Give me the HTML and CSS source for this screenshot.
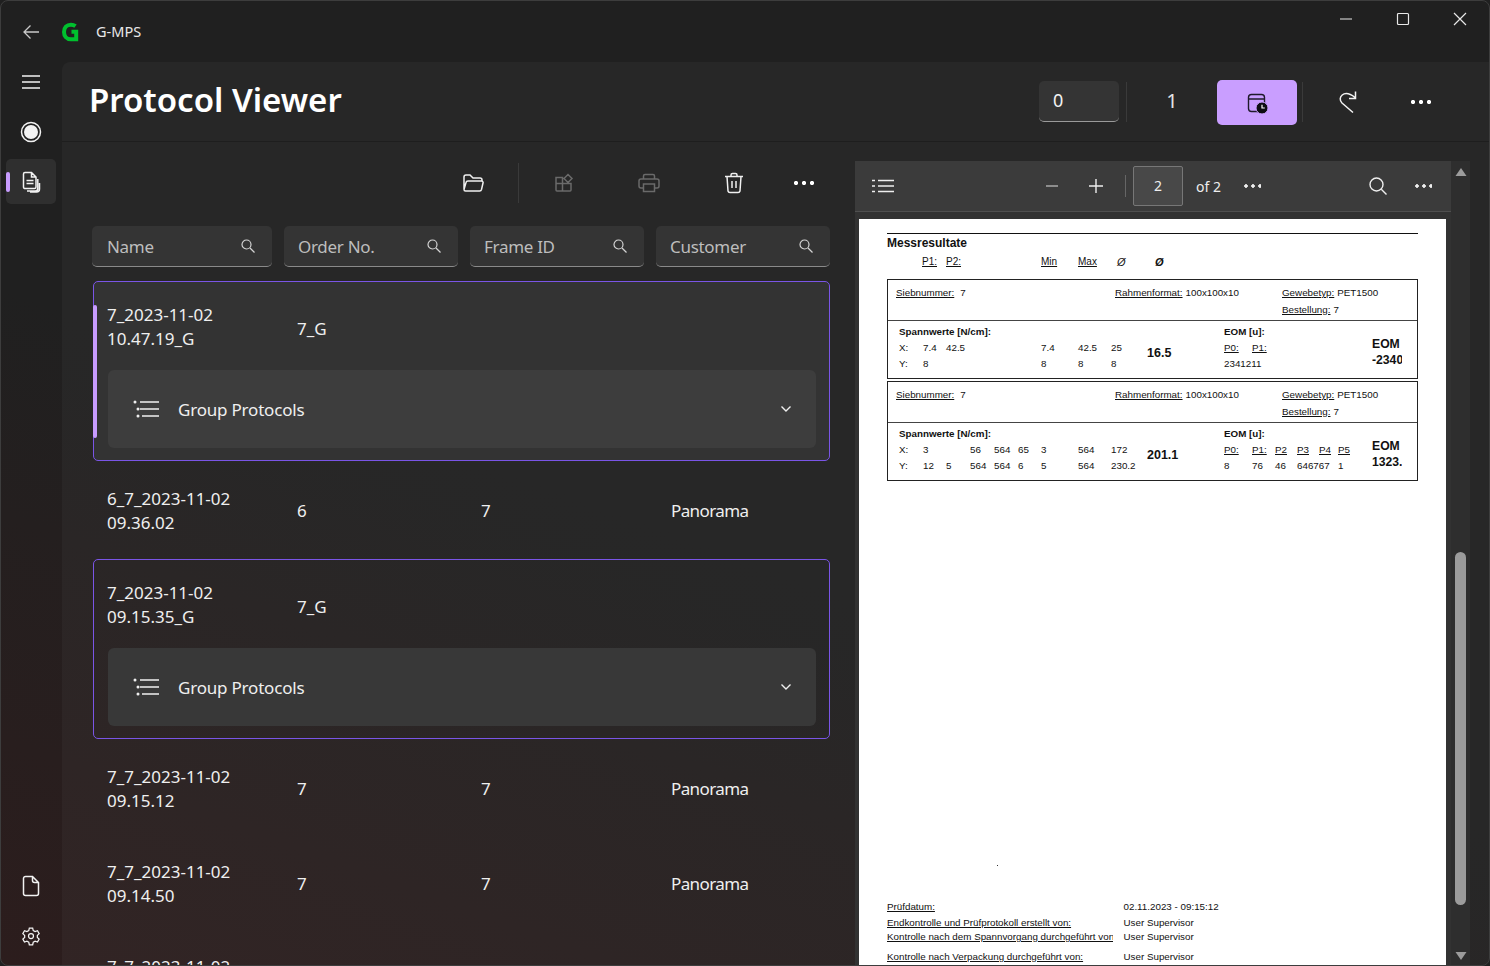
FILE: index.html
```html
<!DOCTYPE html>
<html lang="en">
<head>
<meta charset="UTF-8">
<meta name="viewport" content="width=device-width, initial-scale=1.0">
<title>G-MPS Protocol Viewer</title>
<link rel="stylesheet" href="styles.css">
</head>
<body>
<div class="window">
  <!-- title bar -->
  <header class="titlebar">
    <svg class="back-icon" width="20" height="20" viewBox="0 0 20 20"><path d="M18 10H3M9.500 3.500L3 10l6.500 6.500" /></svg>
    <svg class="logo" width="18" height="20" viewBox="0 0 18 20"><path d="M14.500 4.200C13.200 3.200 11.700 2.700 10 2.700 5.700 2.700 3 5.700 3 10c0 4.200 2.600 7.300 6.800 7.300h5.400V9.800H10.500" /></svg>
    <span class="app-name">G-MPS</span>
    <div class="win-controls">
      <svg width="14" height="14" viewBox="0 0 14 14"><path d="M1 7h12" /></svg>
      <svg width="14" height="14" viewBox="0 0 14 14"><rect x="1.500" y="1.500" width="11" height="11" rx="1" /></svg>
      <svg width="14" height="14" viewBox="0 0 14 14"><path d="M1 1l12 12M13 1L1 13" /></svg>
    </div>
  </header>

  <div class="app-body">
    <!-- side navigation -->
    <nav class="sidebar">
      <div class="nav-item nav-menu">
        <svg width="20" height="16" viewBox="0 0 20 16"><path d="M1 2h18M1 8h18M1 14h18" /></svg>
      </div>
      <div class="nav-item">
        <svg width="22" height="22" viewBox="0 0 22 22"><circle cx="11" cy="11" r="9.500" /><circle class="fill" cx="11" cy="11" r="7" /></svg>
      </div>
      <div class="nav-item nav-selected">
        <span class="nav-accent"></span>
        <svg width="20" height="22" viewBox="0 0 20 22"><path d="M4 1.500h6.500L15 6v10a1.500 1.500 0 0 1-1.500 1.500h-9A1.500 1.500 0 0 1 2.500 16V3A1.500 1.500 0 0 1 4 1.500zM10.500 1.500V6H15M5.500 9.500h7M5.500 12.500h7M16.800 8v9.500a2.500 2.500 0 0 1-2.500 2.500H6M18.500 12v6a3 3 0 0 1-3 3H9" /></svg>
      </div>
      <div class="nav-bottom">
        <div class="nav-item">
          <svg width="18" height="22" viewBox="0 0 18 22"><path d="M3.500 1.500h7L16.500 7.500v11a2 2 0 0 1-2 2h-11a2 2 0 0 1-2-2v-15a2 2 0 0 1 2-2zM10.500 1.500v4a2 2 0 0 0 2 2h4" /></svg>
        </div>
        <div class="nav-item">
          <svg width="20" height="20" viewBox="0 0 24 24"><path d="M10 2.500h4l.7 3 2.200 1.200 2.900-1 2 3.500-2.200 2.100v2.400l2.200 2.100-2 3.500-2.900-1-2.200 1.200-.7 3h-4l-.7-3-2.200-1.200-2.900 1-2-3.500 2.200-2.100v-2.400L2.200 9.200l2-3.500 2.900 1 2.200-1.200z" /><circle cx="12" cy="12" r="3" /></svg>
        </div>
      </div>
    </nav>

    <main class="panel">
      <div class="page-head">
        <h1 class="page-title">Protocol Viewer</h1>
        <div class="head-actions">
          <div class="num-input">0</div>
          <span class="head-sep"></span>
          <div class="head-count">1</div>
          <button class="accent-btn">
            <svg width="24" height="24" viewBox="0 0 24 24"><rect class="dark" x="3.500" y="3.500" width="16" height="17" rx="3" /><path class="dark" d="M3.500 8h16" /><circle class="dark-fill" cx="17" cy="17" r="6" /><path class="hands" d="M17 13.800V17h2.800" /></svg>
          </button>
          <span class="head-sep head-sep-2"></span>
          <div class="head-btn">
            <svg width="24" height="24" viewBox="0 0 24 24"><path d="M17 22.500L6 13c-2.500-2.500-2.300-6 .2-8 2.800-2.200 7-2 12.800 2.500M19.500 1.500V8.500H13" /></svg>
          </div>
          <div class="head-btn head-more"><span class="dots"></span></div>
        </div>
      </div>

      <div class="main-area">
        <section class="list-col">
          <div class="toolbar">
            <div class="tool">
              <svg width="22" height="20" viewBox="0 0 22 20"><path d="M2 16V4a2 2 0 0 1 2-2h4l3 3h7a2 2 0 0 1 2 2v1M3.500 18h14a2 2 0 0 0 2-1.500L21 10a1.500 1.500 0 0 0-1.500-2H6a2 2 0 0 0-2 1.500l-2 7a1.500 1.500 0 0 0 1.500 1.500z" /></svg>
            </div>
            <span class="tool-sep"></span>
            <div class="tool tool-off">
              <svg width="20" height="20" viewBox="0 0 20 20"><path d="M2 4.500h6.500V18H3a1 1 0 0 1-1-1zM8.500 10.500H17V17a1 1 0 0 1-1 1H8.500M2 10.500h6.500M14 1.500L18 5.500 14 9.500 10 5.500z" /></svg>
            </div>
            <div class="tool tool-off">
              <svg width="22" height="20" viewBox="0 0 22 20"><path d="M5.500 6V3a1.500 1.500 0 0 1 1.500-1.500h8A1.500 1.500 0 0 1 16.500 3v3M5.500 15H3a2 2 0 0 1-2-2V8a2 2 0 0 1 2-2h16a2 2 0 0 1 2 2v5a2 2 0 0 1-2 2h-2.500M5.500 11h11v7.500h-11z" /></svg>
            </div>
            <div class="tool">
              <svg width="20" height="22" viewBox="0 0 20 22"><path d="M1 4.500h18M7 4.500V3a1.500 1.500 0 0 1 1.500-1.500h3A1.500 1.500 0 0 1 13 3v1.500M3 4.500l1 14.500a2 2 0 0 0 2 1.500h8a2 2 0 0 0 2-1.500l1-14.500M8 9v7M12 9v7" /></svg>
            </div>
            <div class="tool tool-dots"><span class="dots"></span></div>
          </div>

          <div class="search-row">
            <div class="search-box"><span>Name</span><svg width="14" height="14" viewBox="0 0 14 14"><circle cx="5.500" cy="5.500" r="4.500" /><path d="M9 9l4.500 4.500" /></svg></div>
            <div class="search-box"><span>Order No.</span><svg width="14" height="14" viewBox="0 0 14 14"><circle cx="5.500" cy="5.500" r="4.500" /><path d="M9 9l4.500 4.500" /></svg></div>
            <div class="search-box"><span>Frame ID</span><svg width="14" height="14" viewBox="0 0 14 14"><circle cx="5.500" cy="5.500" r="4.500" /><path d="M9 9l4.500 4.500" /></svg></div>
            <div class="search-box"><span>Customer</span><svg width="14" height="14" viewBox="0 0 14 14"><circle cx="5.500" cy="5.500" r="4.500" /><path d="M9 9l4.500 4.500" /></svg></div>
          </div>

          <div class="protocol-list">
            <div class="group-row group-active">
              <span class="row-accent"></span>
              <div class="row-cells">
                <div class="two-line">7_2023-11-02<br>10.47.19_G</div>
                <div>7_G</div>
                <div></div>
                <div></div>
              </div>
              <div class="expander">
                <svg width="26" height="18" viewBox="0 0 26 18"><path d="M7 2h19M7 9h19M9 16h17" /><circle class="fill" cx="2" cy="2" r="1.500" /><circle class="fill" cx="5" cy="9" r="1.500" /><circle class="fill" cx="5" cy="16" r="1.500" /></svg>
                <span class="expander-label">Group Protocols</span>
                <svg class="chevron" width="12" height="8" viewBox="0 0 12 8"><path d="M1.500 1.500L6 6l4.500-4.500" /></svg>
              </div>
            </div>

            <div class="row-cells plain-row">
              <div>6_7_2023-11-02<br>09.36.02</div>
              <div>6</div>
              <div>7</div>
              <div>Panorama</div>
            </div>

            <div class="group-row">
              <div class="row-cells">
                <div class="two-line">7_2023-11-02<br>09.15.35_G</div>
                <div>7_G</div>
                <div></div>
                <div></div>
              </div>
              <div class="expander">
                <svg width="26" height="18" viewBox="0 0 26 18"><path d="M7 2h19M7 9h19M9 16h17" /><circle class="fill" cx="2" cy="2" r="1.500" /><circle class="fill" cx="5" cy="9" r="1.500" /><circle class="fill" cx="5" cy="16" r="1.500" /></svg>
                <span class="expander-label">Group Protocols</span>
                <svg class="chevron" width="12" height="8" viewBox="0 0 12 8"><path d="M1.500 1.500L6 6l4.500-4.500" /></svg>
              </div>
            </div>

            <div class="row-cells plain-row">
              <div>7_7_2023-11-02<br>09.15.12</div>
              <div>7</div>
              <div>7</div>
              <div>Panorama</div>
            </div>
            <div class="row-cells plain-row">
              <div>7_7_2023-11-02<br>09.14.50</div>
              <div>7</div>
              <div>7</div>
              <div>Panorama</div>
            </div>
            <div class="row-cells plain-row">
              <div>7_7_2023-11-02<br>09.14.31</div>
              <div>7</div>
              <div>7</div>
              <div>Panorama</div>
            </div>
          </div>
        </section>

        <!-- pdf viewer -->
        <section class="viewer">
          <div class="pdf-area">
            <div class="pdf-toolbar">
              <svg class="pt-list" width="22" height="14" viewBox="0 0 22 14"><path d="M6 1.500h16M6 7h16M6 12.500h16M0 1.500h3M0 7h3M0 12.500h3" /></svg>
              <svg class="pt-minus" width="16" height="16" viewBox="0 0 16 16"><path d="M2 8h12" /></svg>
              <svg class="pt-plus" width="16" height="16" viewBox="0 0 16 16"><path d="M1 8h14M8 1v14" /></svg>
              <span class="pt-sep"></span>
              <div class="pt-page">2</div>
              <span class="pt-of">of 2</span>
              <span class="dots dots-small pt-more"></span>
              <svg class="pt-search" width="18" height="18" viewBox="0 0 18 18"><circle cx="7.500" cy="7.500" r="6.500" /><path d="M12.300 12.300L17.500 17.500" /></svg>
              <span class="dots dots-small pt-more2"></span>
            </div>
            <div class="pdf-scroll">
              <article class="pdf-page">
                <div class="pdf-rule"></div>
                <h2 class="pdf-heading">Messresultate</h2>
                <div class="pdf-columns">
                  <u>P1:</u><u>P2:</u><u>Min</u><u>Max</u><i>Ø</i><b><i>Ø</i></b>
                </div>

                <div class="pdf-box">
                  <div class="pdf-info">
                    <div><u>Siebnummer:</u><span>7</span></div>
                    <div><u>Rahmenformat:</u><span>100x100x10</span></div>
                    <div>
                      <p><u>Gewebetyp:</u><span>PET1500</span></p>
                      <p><u>Bestellung:</u><span>7</span></p>
                    </div>
                  </div>
                  <div class="pdf-values">
                    <b class="val-title">Spannwerte [N/cm]:</b>
                    <b class="val-eom-head">EOM [u]:</b>
                    <b class="val-big">16.5</b>
                    <b class="val-eom">EOM<br>-2340.7</b>
                    <span>X:</span><span>7.4</span><span>42.5</span><span></span><span></span><span></span><span>7.4</span><span>42.5</span><span>25</span>
                    <u>P0:</u><u>P1:</u><span></span><span></span><span></span><span></span>
                    <span>Y:</span><span>8</span><span></span><span></span><span></span><span></span><span>8</span><span>8</span><span>8</span>
                    <span>2341211</span>
                  </div>
                </div>

                <div class="pdf-box">
                  <div class="pdf-info">
                    <div><u>Siebnummer:</u><span>7</span></div>
                    <div><u>Rahmenformat:</u><span>100x100x10</span></div>
                    <div>
                      <p><u>Gewebetyp:</u><span>PET1500</span></p>
                      <p><u>Bestellung:</u><span>7</span></p>
                    </div>
                  </div>
                  <div class="pdf-values">
                    <b class="val-title">Spannwerte [N/cm]:</b>
                    <b class="val-eom-head">EOM [u]:</b>
                    <b class="val-big">201.1</b>
                    <b class="val-eom">EOM<br>1323.5</b>
                    <span>X:</span><span>3</span><span></span><span>56</span><span>564</span><span>65</span><span>3</span><span>564</span><span>172</span>
                    <u>P0:</u><u>P1:</u><u>P2</u><u>P3</u><u>P4</u><u>P5</u>
                    <span>Y:</span><span>12</span><span>5</span><span>564</span><span>564</span><span>6</span><span>5</span><span>564</span><span>230.2</span>
                    <span>8</span><span>76</span><span>46</span><span>646767</span><span></span><span>1</span>
                  </div>
                </div>

                <div class="pdf-dot"></div>

                <div class="pdf-signoff">
                  <div class="sign-row sign-date"><u>Prüfdatum:</u><span>02.11.2023 - 09:15:12</span></div>
                  <div class="sign-row"><u>Endkontrolle und Prüfprotokoll erstellt von:</u><span>User Supervisor</span></div>
                  <div class="sign-row"><u>Kontrolle nach dem Spannvorgang durchgeführt von:</u><span>User Supervisor</span></div>
                  <div class="sign-row sign-last"><u>Kontrolle nach Verpackung durchgeführt von:</u><span>User Supervisor</span></div>
                </div>
              </article>
            </div>
          </div>
          <div class="pdf-scrollbar">
            <svg width="12" height="10" viewBox="0 0 12 10"><path d="M6 1l5.500 8H.5z" /></svg>
            <div class="scroll-thumb"></div>
            <svg class="arrow-down" width="12" height="10" viewBox="0 0 12 10"><path d="M.5 1h11L6 9z" /></svg>
          </div>
        </section>
      </div>
    </main>
  </div>
</div>
</body>
</html>
```
FILE: styles.css
```css
html, body {
  height: 100%;
  margin: 0;
  overflow: hidden;
  background: #202020;
}
body {
  font-family: 'Noto Sans', 'Open Sans', sans-serif;
  color: #f2f2f2;
}
svg {
  display: block;
  flex: none;
  fill: none;
  stroke: currentColor;
  stroke-width: 1.5;
}
svg .fill {
  fill: currentColor;
  stroke: none;
}
.window {
  display: flex;
  flex-direction: column;
  height: 966px;
  box-sizing: border-box;
  border: 1px solid #3d3d3d;
  border-radius: 8px;
  overflow: hidden;
  background: linear-gradient(200deg, #202020 55%, #2c1d1d 100%);
}

/* title bar */
.titlebar {
  display: flex;
  align-items: center;
  height: 61px;
  flex: none;
  color: #e8e8e8;
}
.back-icon {
  margin-left: 20px;
  color: #c8c8c8;
  stroke-width: 1.3;
}
.logo {
  margin-left: 20px;
  color: #00c02e;
  stroke-width: 4;
}
.app-name {
  margin: -2px 0 0 17px;
  font-size: 14.500px;
}
.win-controls {
  display: flex;
  margin-left: auto;
  margin-right: 22px;
  margin-top: -25px;
  gap: 43px;
}
.win-controls svg {
  stroke-width: 1.2;
}

/* side nav */
.app-body {
  display: flex;
  flex: 1;
  min-height: 0;
}
.sidebar {
  display: flex;
  flex-direction: column;
  align-items: flex-start;
  width: 61px;
  flex: none;
  box-sizing: border-box;
  padding-left: 5px;
}
.nav-item {
  position: relative;
  display: flex;
  align-items: center;
  justify-content: center;
  width: 50px;
  height: 45px;
  margin-bottom: 5px;
  border-radius: 5px;
}
.nav-menu {
  margin-top: -3px;
}
.nav-menu svg {
  stroke-width: 1.3;
}
.nav-selected {
  background: #2f2f2f;
}
.nav-accent {
  position: absolute;
  left: 0;
  top: 13px;
  width: 4px;
  height: 20px;
  border-radius: 2px;
  background: #c89cff;
}
.nav-bottom {
  margin-top: auto;
  padding-bottom: 2px;
}

/* main panel */
.panel {
  display: flex;
  flex-direction: column;
  flex: 1;
  min-width: 0;
  border-top-left-radius: 8px;
  background: rgba(255, 255, 255, 0.033);
}
.page-head {
  display: flex;
  align-items: center;
  flex: none;
  height: 79px;
  padding-left: 27px;
  border-bottom: 1px solid #1e1e1e;
}
.page-title {
  margin: -4px 0 0;
  font-size: 33px;
  font-weight: 600;
  color: #fff;
}
.head-actions {
  display: flex;
  align-items: center;
  margin-left: auto;
  margin-right: 40px;
}
.num-input {
  width: 80px;
  height: 41px;
  box-sizing: border-box;
  padding-left: 14px;
  line-height: 38px;
  font-size: 18px;
  background: #343434;
  border-radius: 5px;
  border-bottom: 1px solid #9a9a9a;
}
.head-sep {
  width: 1px;
  height: 40px;
  margin-left: 7px;
  background: #3a3a3a;
}
.head-count {
  width: 90px;
  margin-top: -2px;
  text-align: center;
  font-size: 20px;
  color: #e4e4e4;
}
.accent-btn {
  display: flex;
  align-items: center;
  justify-content: center;
  width: 80px;
  height: 45px;
  margin-top: 2px;
  padding: 0;
  border: none;
  border-radius: 5px;
  background: #c99eff;
  color: #1a1a1a;
}
.accent-btn .dark {
  stroke: #1f1a2b;
  stroke-width: 1.4;
}
.accent-btn .dark-fill {
  fill: #0d0d12;
  stroke: #c99eff;
  stroke-width: 1;
}
.accent-btn .hands {
  stroke: #fff;
  stroke-width: 1.2;
}
.head-sep-2 {
  margin-left: 5px;
}
.head-btn {
  display: flex;
  align-items: center;
  justify-content: center;
  width: 90px;
}
.head-more {
  width: 56px;
}
.dots {
  display: block;
  width: 20px;
  height: 4px;
  background:
    radial-gradient(circle at 2px 2px, #fff 1.900px, transparent 2.300px) 0 0 / 8px 4px repeat-x;
}
.dots-small {
  width: 17px;
  height: 4px;
  background:
    radial-gradient(circle at 2px 2px, #eee 1.500px, transparent 2px) 0 0 / 7px 4px repeat-x;
}

.main-area {
  display: flex;
  flex: 1;
  min-height: 0;
}

/* left column */
.list-col {
  display: flex;
  flex-direction: column;
  width: 793px;
  flex: none;
  box-sizing: border-box;
  padding: 0 25px 0 30px;
}
.toolbar {
  display: flex;
  align-items: center;
  justify-content: flex-end;
  height: 84px;
  flex: none;
  box-sizing: border-box;
  padding-bottom: 2px;
}
.tool {
  display: flex;
  align-items: center;
  justify-content: center;
  width: 85px;
  color: #f0f0f0;
}
.tool-off {
  color: #6a6a6a;
}
.tool-dots {
  width: 52px;
  margin-left: 1.500px;
}
.tool-sep {
  width: 1px;
  height: 40px;
  margin: 0 3px 0 2px;
  background: #3a3a3a;
}
.search-row {
  display: flex;
  gap: 12px;
  flex: none;
  margin-bottom: 14px;
}
.search-box {
  display: flex;
  align-items: center;
  justify-content: space-between;
  flex: 1;
  height: 41px;
  box-sizing: border-box;
  padding: 0 17px 0 14px;
  background: #343434;
  border-radius: 5px;
  border-bottom: 1px solid #8a8a8a;
  color: #bdbdbd;
  font-size: 17px;
  letter-spacing: -0.300px;
}
.search-box svg {
  color: #d4d4d4;
  stroke-width: 1.2;
}
.search-box:first-child {
  flex: 0 0 180px;
  padding-left: 15px;
}
.protocol-list {
  flex: 1;
  min-height: 0;
  margin-left: 1px;
  overflow: hidden;
  font-size: 17px;
  line-height: 24px;
  color: #efefef;
}
.row-cells {
  display: grid;
  grid-template-columns: 190px 184px 190px 1fr;
  align-items: center;
  padding-left: 14px;
}
.row-cells > div:last-child {
  letter-spacing: -0.600px;
}
.plain-row {
  height: 95px;
  box-sizing: border-box;
  padding-bottom: 2px;
}
.group-row {
  position: relative;
  box-sizing: border-box;
  height: 180px;
  margin-bottom: 3px;
  border: 1px solid #7a55e6;
  border-radius: 5px;
}
.group-row .row-cells {
  height: 88px;
  box-sizing: border-box;
  padding: 5px 0 0 13px;
}
.two-line {
  margin-top: -3px;
}
.group-active {
  background: #333;
}
.row-accent {
  position: absolute;
  left: -1px;
  top: 23px;
  width: 4px;
  height: 133px;
  border-radius: 2px;
  background: #c89cff;
}
.expander {
  display: flex;
  align-items: center;
  height: 78px;
  margin: 0 13px 0 14px;
  padding: 0 24px 0 25px;
  background: #3d3d3d;
  border-radius: 6px;
}
.group-row:not(.group-active) .expander {
  background: #383838;
}
.expander-label {
  margin: 2px 0 0 19px;
  letter-spacing: -0.200px;
}
.expander svg {
  stroke-width: 1.4;
}
.chevron {
  margin-left: auto;
}

/* pdf viewer */
.viewer {
  display: flex;
  width: 615px;
  flex: none;
  margin-top: 19px;
  min-height: 0;
}
.pdf-area {
  display: flex;
  flex-direction: column;
  width: 596px;
  flex: none;
  background: #323232;
}
.pdf-toolbar {
  display: flex;
  align-items: center;
  flex: none;
  height: 50px;
  border-bottom: 1px solid #4f4f4f;
  background: #3b3b3b;
  color: #eee;
  font-size: 14px;
}
.pdf-toolbar svg {
  stroke-width: 1.4;
}
.pt-list { margin-left: 17px; }
.pt-minus { margin-left: 150px; color: #aaa; }
.pt-plus { margin-left: 28px; }
.pt-sep {
  width: 1px;
  height: 22px;
  margin-left: 21px;
  background: #666;
}
.pt-page {
  width: 50px;
  height: 40px;
  box-sizing: border-box;
  margin-left: 7px;
  line-height: 38px;
  text-align: center;
  background: #484848;
  border: 1px solid #777;
  border-radius: 2px;
}
.pt-of { margin-left: 13px; }
.pt-more { margin-left: 23px; }
.pt-search { margin-left: 108px; }
.pt-more2 { margin-left: 28px; }
.pdf-scroll {
  flex: 1;
  min-height: 0;
  overflow: hidden;
  padding: 7px 5px 0 4px;
}
.pdf-page {
  display: flex;
  flex-direction: column;
  height: 100%;
  box-sizing: border-box;
  padding: 14px 28px 0;
  background: #fff;
  color: #111;
  font-family: 'Liberation Sans', Arial, sans-serif;
  font-size: 9.800px;
  line-height: 12px;
}
.pdf-rule {
  height: 1px;
  background: #111;
}
.pdf-heading {
  margin: 2px 0 0;
  font-size: 12px;
  line-height: 14px;
}
.pdf-columns {
  display: grid;
  grid-template-columns: 24px 95px 37px 39px 38px 1fr;
  height: 17px;
  padding: 6px 0 0 35px;
  margin-bottom: 6px;
  font-size: 10px;
}
.pdf-columns i {
  font-size: 11px;
}
.pdf-box {
  height: 100px;
  box-sizing: border-box;
  margin-bottom: 2px;
  border: 1px solid #222;
}
.pdf-info {
  display: grid;
  grid-template-columns: 219px 167px 1fr;
  height: 41px;
  box-sizing: border-box;
  padding: 7px 0 0 8px;
  border-bottom: 1px solid #444;
}
.pdf-info span {
  margin-left: 3px;
}
.pdf-info div:first-child span {
  margin-left: 6px;
}
.pdf-info p {
  margin: 0 0 5px;
}
.pdf-values {
  display: grid;
  grid-template-columns: 24px 23px 24px 24px 24px 23px 37px 33px 36px 77px 28px 23px 22px 22px 19px 34px 30px;
  grid-template-rows: 16px 16px 16px;
  padding: 5px 0 0 11px;
  white-space: nowrap;
}
.val-title {
  grid-column: 1 / 11;
  grid-row: 1;
}
.val-eom-head {
  grid-column: 11 / 17;
  grid-row: 1;
}
.val-big {
  grid-column: 10;
  grid-row: 2 / 4;
  align-self: start;
  line-height: 22px;
  font-size: 12.500px;
}
.val-eom {
  grid-column: 17;
  grid-row: 1 / 4;
  overflow: hidden;
  padding-top: 10px;
  font-size: 12.200px;
  line-height: 16px;
}
.pdf-dot {
  width: 1px;
  height: 1px;
  margin: 382px 0 0 110px;
  background: #333;
}
.pdf-signoff {
  margin-top: 35px;
}
.sign-row {
  display: grid;
  grid-template-columns: 236.500px 1fr;
  height: 14px;
  white-space: nowrap;
}
.sign-row u {
  display: block;
  width: 226px;
  overflow: hidden;
}
.sign-date {
  height: 16px;
}
.sign-last {
  margin-top: 6px;
}
.pdf-scrollbar {
  display: flex;
  flex-direction: column;
  align-items: center;
  width: 19px;
  flex: none;
  padding-top: 6px;
  background: #2e2e2e;
  color: #9c9c9c;
}
.pdf-scrollbar svg {
  fill: #9c9c9c;
  stroke: none;
}
.scroll-thumb {
  width: 11px;
  height: 353px;
  margin-top: 375px;
  border-radius: 6px;
  background: #9c9c9c;
}
.arrow-down {
  margin-top: 46px;
}
```
